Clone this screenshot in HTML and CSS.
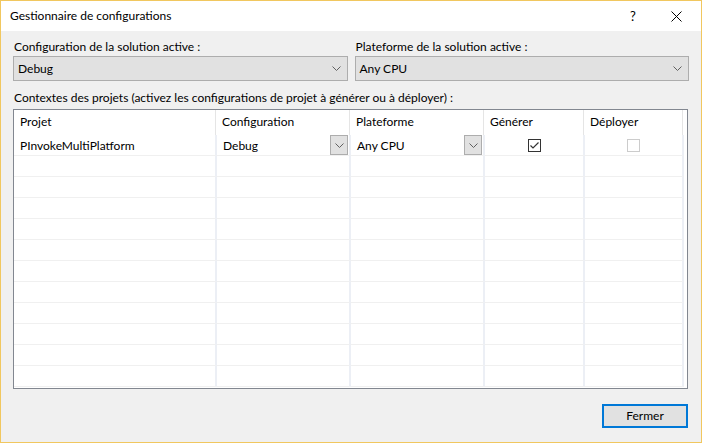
FILE: index.html
```html
<!DOCTYPE html>
<html lang="fr">
<head>
<meta charset="utf-8">
<title>Gestionnaire de configurations</title>
<link rel="stylesheet" href="styles.css">
</head>
<body>
<div class="window">
  <div class="titlebar">
    <span class="title">Gestionnaire de configurations</span>
    <span class="help">?</span>
    <span class="close"><svg width="11" height="11" viewBox="0 0 11 11"><path d="M0.5 0.5 L10.5 10.5 M10.5 0.5 L0.5 10.5" stroke="#000" stroke-width="1" fill="none"/></svg></span>
  </div>
  <div class="content">
    <div class="selectors">
      <div class="field">
        <div class="label">Configuration de la solution active :</div>
        <div class="combo"><span>Debug</span><svg class="chev" width="9" height="5" viewBox="0 0 9 5"><path d="M0.5 0.5 L4.5 4.5 L8.5 0.5" stroke="#606060" fill="none"/></svg></div>
      </div>
      <div class="field">
        <div class="label">Plateforme de la solution active :</div>
        <div class="combo"><span>Any CPU</span><svg class="chev" width="9" height="5" viewBox="0 0 9 5"><path d="M0.5 0.5 L4.5 4.5 L8.5 0.5" stroke="#606060" fill="none"/></svg></div>
      </div>
    </div>
    <div class="label ctx">Contextes des projets (activez les configurations de projet à générer ou à déployer) :</div>
    <div class="grid">
      <div class="row head">
        <div class="cell c1">Projet</div>
        <div class="cell c2">Configuration</div>
        <div class="cell c3">Plateforme</div>
        <div class="cell c4">Générer</div>
        <div class="cell c5">Déployer</div>
      </div>
      <div class="row">
        <div class="cell c1">PInvokeMultiPlatform</div>
        <div class="cell c2 sel"><span>Debug</span><span class="dd"><svg width="9" height="5" viewBox="0 0 9 5"><path d="M0.5 0.5 L4.5 4.5 L8.5 0.5" stroke="#606060" fill="none"/></svg></span></div>
        <div class="cell c3 sel"><span>Any CPU</span><span class="dd"><svg width="9" height="5" viewBox="0 0 9 5"><path d="M0.5 0.5 L4.5 4.5 L8.5 0.5" stroke="#606060" fill="none"/></svg></span></div>
        <div class="cell c4 ck"><span class="box on"><svg width="11" height="11" viewBox="0 0 11 11"><path d="M1.5 5.5 L4 8 L9.5 2.5" stroke="#333" stroke-width="1.2" fill="none"/></svg></span></div>
        <div class="cell c5 ck"><span class="box off"></span></div>
      </div>
      <div class="row"><div class="cell c1"></div><div class="cell c2"></div><div class="cell c3"></div><div class="cell c4"></div><div class="cell c5"></div></div>
      <div class="row"><div class="cell c1"></div><div class="cell c2"></div><div class="cell c3"></div><div class="cell c4"></div><div class="cell c5"></div></div>
      <div class="row"><div class="cell c1"></div><div class="cell c2"></div><div class="cell c3"></div><div class="cell c4"></div><div class="cell c5"></div></div>
      <div class="row"><div class="cell c1"></div><div class="cell c2"></div><div class="cell c3"></div><div class="cell c4"></div><div class="cell c5"></div></div>
      <div class="row"><div class="cell c1"></div><div class="cell c2"></div><div class="cell c3"></div><div class="cell c4"></div><div class="cell c5"></div></div>
      <div class="row"><div class="cell c1"></div><div class="cell c2"></div><div class="cell c3"></div><div class="cell c4"></div><div class="cell c5"></div></div>
      <div class="row"><div class="cell c1"></div><div class="cell c2"></div><div class="cell c3"></div><div class="cell c4"></div><div class="cell c5"></div></div>
      <div class="row"><div class="cell c1"></div><div class="cell c2"></div><div class="cell c3"></div><div class="cell c4"></div><div class="cell c5"></div></div>
      <div class="row"><div class="cell c1"></div><div class="cell c2"></div><div class="cell c3"></div><div class="cell c4"></div><div class="cell c5"></div></div>
      <div class="row"><div class="cell c1"></div><div class="cell c2"></div><div class="cell c3"></div><div class="cell c4"></div><div class="cell c5"></div></div>
      <div class="row"><div class="cell c1"></div><div class="cell c2"></div><div class="cell c3"></div><div class="cell c4"></div><div class="cell c5"></div></div>
    </div>
    <div class="footer">
      <button class="btn">Fermer</button>
    </div>
  </div>
</div>
</body>
</html>
```

FILE: styles.css
```css
* { box-sizing: border-box; }
html, body { margin: 0; padding: 0; }
body {
  width: 702px;
  height: 443px;
  overflow: hidden;
  font-family: Lato, "Noto Sans", sans-serif;
  font-size: 12px;
  color: #000;
}
.window {
  width: 702px;
  height: 443px;
  border: 1px solid #f1c75f;
  background: #f0f0f0;
  display: flex;
  flex-direction: column;
}
.titlebar {
  height: 30px;
  background: #fff;
  display: flex;
  align-items: center;
  padding-left: 9px;
}
.title { flex: 1; line-height: 16px; }
.help { width: 16px; text-align: center; margin-right: 30px; font-size: 13px; }
.close { width: 11px; height: 11px; margin-right: 19px; display: flex; }
.content {
  padding: 8px 12px 0 12px;
  flex: 1;
  display: flex;
  flex-direction: column;
}
.selectors {
  display: flex;
  gap: 7px;
}
.field { flex: 1; display: flex; flex-direction: column; }
.label { line-height: 16px; padding-left: 1px; }
.field .label { margin-bottom: 1px; }
.combo {
  height: 25px;
  background: #e1e1e1;
  border: 1px solid #adadad;
  display: flex;
  align-items: center;
  justify-content: space-between;
  padding: 0 6px 0 4px;
}
.chev { display: block; }
.ctx { margin-top: 9px; margin-right: 0; }
.grid {
  margin-top: 3px;
  margin-right: 1px;
  height: 280px;
  border: 1px solid #828790;
  background: #fff;
  overflow: hidden;
}
.row { display: flex; height: 21px; }
.row.head { height: 25px; }
.cell {
  height: 100%;
  display: flex;
  align-items: center;
  padding-left: 6px;
  border-right: 2px solid #eceff5;
  border-bottom: 1px solid #f0f0f0;
}
.head .cell {
  border-right: 1px solid #e5e5e5;
  border-bottom: none;
  padding-bottom: 2px;
}
.c1 { width: 203px; }
.c2 { width: 134px; }
.c3 { width: 134px; }
.c4 { width: 100px; }
.c5 { width: 99px; }
.head .c1 { width: 202px; }
.sel { justify-content: space-between; padding-right: 1px; }
.dd {
  width: 18px;
  height: 20px;
  background: #e1e1e1;
  border: 1px solid #adadad;
  display: flex;
  align-items: center;
  justify-content: center;
}
.ck { justify-content: center; padding-left: 0; }
.box {
  width: 13px;
  height: 13px;
  display: flex;
  align-items: center;
  justify-content: center;
  background: #fff;
}
.box.on { border: 1px solid #333; }
.box.off { border: 1px solid #cccccc; }
.footer {
  display: flex;
  justify-content: flex-end;
  padding-top: 15px;
  padding-right: 1px;
}
.btn {
  width: 86px;
  height: 24px;
  background: #e1e1e1;
  border: 2px solid #0078d7;
  font-family: Lato, "Noto Sans", sans-serif;
  font-size: 12px;
  color: #000;
  padding: 0;
  line-height: 16px;
}
```
